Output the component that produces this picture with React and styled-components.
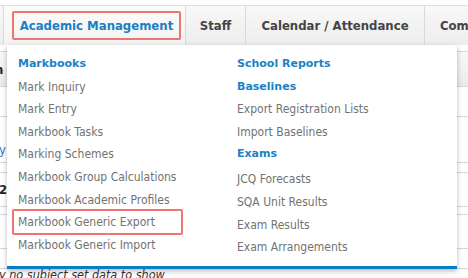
import React from "react";
import styled, { createGlobalStyle, css } from "styled-components";

const GlobalStyle = createGlobalStyle`
  html, body {
    margin: 0;
    padding: 0;
    background: #ffffff;
    font-family: "DejaVu Sans Condensed", "DejaVu Sans", sans-serif;
  }
`;

const Page = styled.div`
  position: relative;
  width: 468px;
  height: 278px;
  overflow: hidden;
  background: #ffffff;
  padding-top: 5px;
  box-sizing: border-box;
`;

const NavBar = styled.div`
  display: flex;
  height: 40px;
  border-top: 1px solid #dedede;
  padding-left: 3px;
  background: linear-gradient(#f8f8f8, #ededed);
  box-sizing: border-box;
`;

const Tab = styled.div`
  flex: none;
  width: ${(p) => p.$width}px;
  display: flex;
  align-items: center;
  justify-content: center;
  border-left: 1px solid #d9d9d9;
  font-weight: bold;
  font-size: 13px;
  color: #444444;
  white-space: nowrap;
  overflow: hidden;
  box-sizing: border-box;
  ${(p) =>
    p.$active &&
    css`
      justify-content: flex-start;
      padding-left: 8px;
      color: #1a80c4;
      background: linear-gradient(#fbfbfb, #f3f3f3);
    `}
  ${(p) =>
    p.$clip &&
    css`
      justify-content: flex-start;
      padding-left: 15px;
    `}
`;

const Marked = styled.span`
  display: flex;
  align-items: center;
  justify-content: center;
  width: ${(p) => p.$width}px;
  height: ${(p) => p.$height}px;
  border: 2px solid #f07474;
  border-radius: 2px;
  box-sizing: border-box;
`;

const Table = styled.div`
  display: flex;
  flex-direction: column;
`;

const Row = styled.div`
  flex: none;
  height: ${(p) => p.$height}px;
  border-bottom: 1px solid #d5d5d5;
  box-sizing: border-box;
  display: flex;
  align-items: ${(p) => (p.$low ? "flex-end" : "center")};
  padding-bottom: ${(p) => (p.$low ? 5 : 0)}px;
  font-size: 13px;
  white-space: nowrap;
  background: ${(p) => (p.$head ? "linear-gradient(#f9f9f9, #e9e9e9)" : "#ffffff")};
`;

const CellText = styled.span`
  margin-left: ${(p) => p.$offset}px;
  color: ${(p) => p.$color || "#222"};
  font-weight: ${(p) => (p.$bold ? "bold" : "normal")};
`;

const Notice = styled.div`
  margin-left: -1px;
  font-style: italic;
  font-size: 12.5px;
  line-height: 11px;
  color: #333333;
  white-space: nowrap;
`;

const Dropdown = styled.div`
  position: absolute;
  left: 7px;
  top: 45px;
  width: 450px;
  height: 224px;
  background: #ffffff;
  border-bottom: 3px solid #0a7dc6;
  box-shadow: 0 2px 5px rgba(0, 0, 0, 0.28);
  box-sizing: border-box;
  display: grid;
  grid-template-columns: 219px 1fr;
  padding: 8px 0 0 11px;
`;

const Column = styled.div`
  display: flex;
  flex-direction: column;
`;

const Heading = styled.div`
  height: 22.6px;
  line-height: 22.6px;
  font-family: "DejaVu Sans", sans-serif;
  font-size: 11px;
  font-weight: bold;
  color: #1a82c6;
  margin-bottom: ${(p) => (p.$spaced ? 2.5 : 0)}px;
  white-space: nowrap;
`;

const Item = styled.div`
  position: relative;
  height: 22.6px;
  line-height: 22.6px;
  font-size: 12px;
  color: #727272;
  white-space: nowrap;
  ${(p) =>
    p.$marked &&
    css`
      &::after {
        content: "";
        position: absolute;
        left: -6px;
        top: -2px;
        width: 171px;
        height: 26px;
        border: 2px solid #f07474;
        border-radius: 2px;
        box-sizing: border-box;
      }
    `}
`;

const rows = [
  { h: 7 },
  { h: 35, head: true, text: "n", offset: -5, bold: true },
  { h: 30 },
  { h: 46, text: "y", offset: -1, color: "#1a80c4", low: true },
  { h: 10 },
  { h: 34, text: "2", offset: -1, bold: true },
  { h: 8 },
  { h: 34 },
  { h: 20 },
];

const App = () => {
  return (
    <Page>
      <GlobalStyle />
      <NavBar>
        <Tab $width={182} $active>
          <Marked $width={169} $height={29}>Academic Management</Marked>
        </Tab>
        <Tab $width={60}>Staff</Tab>
        <Tab $width={179}>Calendar / Attendance</Tab>
        <Tab $width={44} $clip>
          Communication
        </Tab>
      </NavBar>
      <Table>
        {rows.map((r, i) => (
          <Row key={i} $height={r.h} $head={r.head} $low={r.low}>
            {r.text && (
              <CellText $offset={r.offset} $color={r.color} $bold={r.bold}>
                {r.text}
              </CellText>
            )}
          </Row>
        ))}
      </Table>
      <Notice>y no subject set data to show</Notice>

      <Dropdown>
        <Column>
          <Heading>Markbooks</Heading>
          <Item>Mark Inquiry</Item>
          <Item>Mark Entry</Item>
          <Item>Markbook Tasks</Item>
          <Item>Marking Schemes</Item>
          <Item>Markbook Group Calculations</Item>
          <Item>Markbook Academic Profiles</Item>
          <Item $marked>Markbook Generic Export</Item>
          <Item>Markbook Generic Import</Item>
        </Column>
        <Column>
          <Heading>School Reports</Heading>
          <Heading>Baselines</Heading>
          <Item>Export Registration Lists</Item>
          <Item>Import Baselines</Item>
          <Heading $spaced>Exams</Heading>
          <Item>JCQ Forecasts</Item>
          <Item>SQA Unit Results</Item>
          <Item>Exam Results</Item>
          <Item>Exam Arrangements</Item>
        </Column>
      </Dropdown>
    </Page>
  );
};

export default App;
